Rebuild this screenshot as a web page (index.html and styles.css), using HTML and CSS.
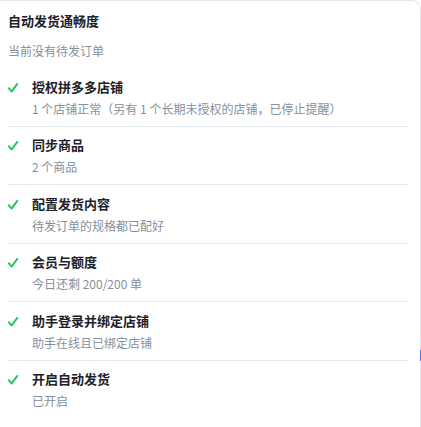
FILE: index.html
```html
<!DOCTYPE html>
<html lang="zh">
<head>
<meta charset="utf-8">
<link rel="stylesheet" href="styles.css">
</head>
<body>
<div class="card">
  <div class="head">
    <div class="title">自动发货通畅度</div>
    <div class="sub">当前没有待发订单</div>
  </div>
  <ul class="list">
    <li class="item">
      <svg class="check" viewBox="0 0 10 10"><path d="M0.8 5.2 L3.6 8.6 L9.3 0.9"/></svg>
      <div class="body">
        <div class="name">授权拼多多店铺</div>
        <div class="desc">1 个店铺正常（另有 1 个长期未授权的店铺，已停止提醒）</div>
      </div>
    </li>
    <li class="item">
      <svg class="check" viewBox="0 0 10 10"><path d="M0.8 5.2 L3.6 8.6 L9.3 0.9"/></svg>
      <div class="body">
        <div class="name">同步商品</div>
        <div class="desc">2 个商品</div>
      </div>
    </li>
    <li class="item">
      <svg class="check" viewBox="0 0 10 10"><path d="M0.8 5.2 L3.6 8.6 L9.3 0.9"/></svg>
      <div class="body">
        <div class="name">配置发货内容</div>
        <div class="desc">待发订单的规格都已配好</div>
      </div>
    </li>
    <li class="item">
      <svg class="check" viewBox="0 0 10 10"><path d="M0.8 5.2 L3.6 8.6 L9.3 0.9"/></svg>
      <div class="body">
        <div class="name">会员与额度</div>
        <div class="desc">今日还剩 200/200 单</div>
      </div>
    </li>
    <li class="item">
      <svg class="check" viewBox="0 0 10 10"><path d="M0.8 5.2 L3.6 8.6 L9.3 0.9"/></svg>
      <div class="body">
        <div class="name">助手登录并绑定店铺</div>
        <div class="desc">助手在线且已绑定店铺</div>
      </div>
    </li>
    <li class="item last">
      <svg class="check" viewBox="0 0 10 10"><path d="M0.8 5.2 L3.6 8.6 L9.3 0.9"/></svg>
      <div class="body">
        <div class="name">开启自动发货</div>
        <div class="desc">已开启</div>
      </div>
    </li>
  </ul>
</div>
<div class="edge-mark"></div>
</body>
</html>
```
FILE: styles.css
```css
html, body {
  margin: 0;
  padding: 0;
  background: #ffffff;
}
body {
  font-family: "Noto Sans CJK SC", "Noto Sans", sans-serif;
  width: 421px;
  height: 427px;
  overflow: hidden;
  position: relative;
}
.card {
  box-sizing: border-box;
  width: 431px;
  height: 427px;
  margin-left: -10px;
  padding: 10px 12px 0 18px;
  border: 1px solid #e3e5e9;
  border-left: none;
  border-bottom: none;
  border-radius: 0 9px 0 0;
  background: #fff;
}
.head {
  margin-bottom: 8px;
}
.title {
  font-size: 13px;
  font-weight: 700;
  line-height: 20px;
  color: #1d2129;
}
.sub {
  margin-top: 11px;
  font-size: 12px;
  line-height: 18px;
  color: #86909c;
}
.list {
  list-style: none;
  margin: 0;
  padding: 0;
}
.item {
  display: flex;
  align-items: flex-start;
  padding: 8.5px 0 8px;
  border-bottom: 1px solid #e5e8ef;
}
.item.last {
  border-bottom: none;
}
.check {
  width: 10px;
  height: 10px;
  flex: none;
  margin: 6px 14px 0 0;
  fill: none;
  stroke: #22c55e;
  stroke-width: 1.9;
  stroke-linecap: round;
  stroke-linejoin: round;
  overflow: visible;
}
.name {
  font-size: 13px;
  font-weight: 700;
  line-height: 20px;
  color: #1d2129;
}
.desc {
  margin-top: 3px;
  font-size: 12px;
  line-height: 18px;
  color: #86909c;
}
.edge-mark {
  position: absolute;
  left: 420px;
  top: 350px;
  width: 1px;
  height: 11px;
  background: #4d7cf0;
}
```
